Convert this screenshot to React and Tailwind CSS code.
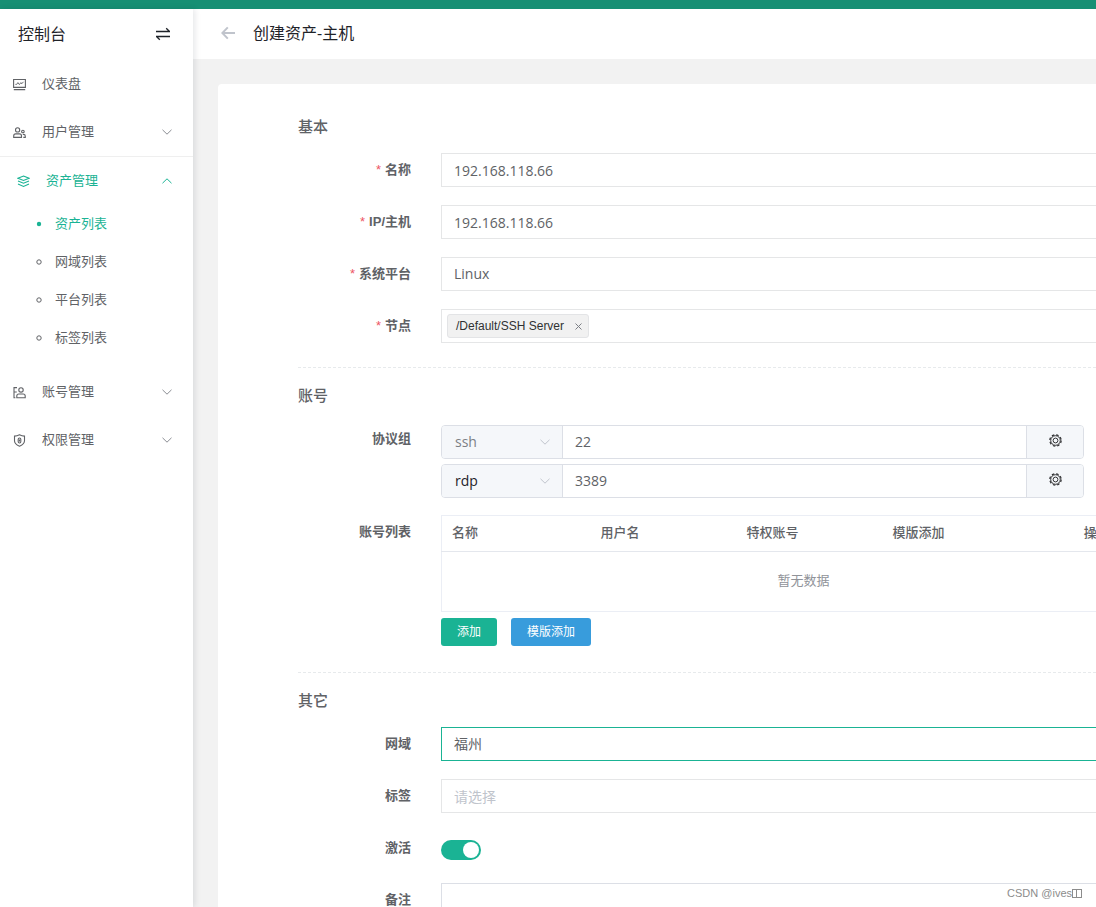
import { useState } from "react";

const Chevron = ({ up, className }) => (
  <svg
    viewBox="0 0 10 6"
    width="10"
    height="6"
    fill="none"
    stroke="currentColor"
    className={className}
    aria-hidden="true"
  >
    <path d={up ? "M0.5 5.2 5 0.8l4.5 4.4" : "M0.5 0.8 5 5.2l4.5-4.4"} />
  </svg>
);

const Icon = ({ children }) => (
  <svg
    viewBox="0 0 13 13"
    width="13"
    height="13"
    fill="none"
    stroke="currentColor"
    strokeWidth="1.1"
    className="shrink-0"
    aria-hidden="true"
  >
    {children}
  </svg>
);

const DashboardIcon = () => (
  <Icon>
    <path d="M0.6 1.5h11.8v7.9H0.6zM0.8 11.6h11.4" />
    <path d="M2.4 6.4h1.3l1.2-1.8 1.5 2 1.5-2 .8 1.2 1.8-2" strokeWidth="0.9" />
  </Icon>
);

const UsersIcon = () => (
  <Icon>
    <circle cx="4.6" cy="3.9" r="2.1" />
    <path d="M0.7 11.4V9.9c0-1.2.8-2 2-2h3.8c1.2 0 2 .8 2 2v1.5z" />
    <circle cx="9.9" cy="5.5" r="1.3" />
    <path d="M9.8 8.4h.7c1.1 0 1.8.7 1.8 1.8v1.2h-2" />
  </Icon>
);

const LayersIcon = () => (
  <Icon>
    <path d="M6.5 1 12 3.2 6.5 5.4 1 3.2z" />
    <path d="m1 6 5.5 2.200L12 6M1 9l5.500 2.400L12 9" />
  </Icon>
);

const AccountIcon = () => (
  <Icon>
    <path d="M4 1.600H1v10.200h1.400M1 6h2.800" />
    <circle cx="8" cy="3.900" r="2.200" />
    <path d="M3.800 11.700V10c0-1.200.8-2 2-2h4.400c1.200 0 2 .8 2 2v1.700z" />
  </Icon>
);

const ShieldIcon = () => (
  <Icon>
    <path d="M6.500.8c1.600.9 3.200 1.300 5 1.300v4.700c0 2.500-2 4.200-5 5.400-3-1.200-5-2.900-5-5.400V2.100c1.800 0 3.400-.4 5-1.300z" />
    <rect x="5.200" y="4" width="2.600" height="5" rx="1.200" />
    <path d="M6.500 5.500v2" />
  </Icon>
);

const GearIcon = () => (
  <Icon>
    <circle cx="6.500" cy="6.500" r="4.800" strokeWidth="1" />
    <circle cx="6.500" cy="6.500" r="5.700" strokeWidth="1.200" strokeDasharray="2.500 1.977" />
    <circle cx="6.500" cy="6.500" r="2.400" strokeWidth="1" />
  </Icon>
);

const assetLinks = ["资产列表", "网域列表", "平台列表", "标签列表"];

const MenuItem = ({ icon, label, expandable }) => (
  <li>
    <a href="#" className="flex h-12 items-center pl-[13px] pr-[21px]">
      {icon}
      <span className="ml-4 flex-1">{label}</span>
      {expandable && <Chevron className="text-[#8a8d93]" />}
    </a>
  </li>
);

function Sidebar() {
  return (
    <aside className="relative z-10 w-[193px] shrink-0 bg-white text-[13px] text-[#606266] shadow-[2px_0_6px_rgba(0,21,41,0.10)]">
      <div className="flex h-[51px] items-center justify-between pr-[23px] pb-[2px] pl-[18px] text-base text-[#1f2329]">
        <span>控制台</span>
        <button type="button" aria-label="切换视图">
          <svg viewBox="0 0 14 14" width="14" height="14" fill="none" stroke="currentColor" strokeWidth="1.3">
            <path d="M0 4.500h13.500L10.200 1.200M14 9.500H0.500l3.300 3.300" />
          </svg>
        </button>
      </div>
      <nav>
        <ul>
          <MenuItem icon={<DashboardIcon />} label="仪表盘" />
          <MenuItem icon={<UsersIcon />} label="用户管理" expandable />
          <li className="border-t border-[#efefef] pb-[11px]">
            <a href="#" className="flex h-12 items-center pl-[17px] pr-[21px] text-[#1ab394]">
              <LayersIcon />
              <span className="ml-4 flex-1">资产管理</span>
              <Chevron up />
            </a>
            <ul>
              {assetLinks.map((label, i) => (
                <li key={label}>
                  <a
                    href="#"
                    className={
                      i === 0
                        ? "flex h-[38px] items-center gap-[13px] pl-9 text-[#1ab394]"
                        : "flex h-[38px] items-center gap-[13px] pl-9"
                    }
                  >
                    <svg viewBox="0 0 6 6" width="6" height="6" aria-hidden="true">
                      {i === 0 ? (
                        <circle cx="3" cy="3" r="2.200" fill="currentColor" />
                      ) : (
                        <circle cx="3" cy="3" r="2.200" fill="none" stroke="currentColor" />
                      )}
                    </svg>
                    {label}
                  </a>
                </li>
              ))}
            </ul>
          </li>
          <MenuItem icon={<AccountIcon />} label="账号管理" expandable />
          <MenuItem icon={<ShieldIcon />} label="权限管理" expandable />
        </ul>
      </nav>
    </aside>
  );
}

const fieldClass =
  "block h-[34px] w-full appearance-none border border-[#e5e6e7] bg-white px-3 text-sm text-[#606266] outline-none placeholder:text-[#c0c4cc]";

const Row = ({ label, id, required, children }) => (
  <div className="flex items-start">
    <label
      htmlFor={id}
      className="w-[143px] shrink-0 pr-[30px] text-right font-['Liberation_Sans','Noto_Sans_CJK_SC',sans-serif] text-[13px] leading-[34px] font-bold"
    >
      {required && <span className="mr-1 font-normal text-[#ed5565]">*</span>}
      {label}
    </label>
    <div className="min-w-0 flex-1">{children}</div>
  </div>
);

const SectionTitle = ({ children }) => (
  <h3 className="mb-4 text-[15px] leading-[22px] font-medium">{children}</h3>
);

const Divider = () => <hr className="mb-4 border-t border-dashed border-[#e7eaec]" />;

function Protocol({ id, name, port, disabled }) {
  return (
    <div className="flex h-[34px] w-[643px] overflow-hidden rounded border border-[#dcdfe6] text-sm">
      <div className="relative w-[121px] border-r border-[#dcdfe6] bg-[#f5f7fa]">
        <select
          id={id}
          aria-label="协议"
          defaultValue={name}
          className={
            disabled
              ? "h-full w-full appearance-none pl-[13px] text-[#7c7f85] outline-none"
              : "h-full w-full appearance-none pl-[13px] text-[#1f2329] outline-none"
          }
        >
          <option>{name}</option>
        </select>
        <Chevron className="pointer-events-none absolute top-[13px] right-3 text-[#c0c4cc]" />
      </div>
      <input
        aria-label="端口"
        defaultValue={port}
        className="min-w-0 flex-1 px-3 text-[#606266] outline-none"
      />
      <button
        type="button"
        aria-label="协议设置"
        className="flex w-[57px] items-center justify-center border-l border-[#dcdfe6] bg-[#f5f7fa] pb-[3px] text-[#303133]"
      >
        <GearIcon />
      </button>
    </div>
  );
}

function AccountTable() {
  return (
    <table className="w-full table-fixed border border-[#ebeef5] text-[13px] leading-5">
      <colgroup>
        <col className="w-[149px]" />
        <col className="w-[146px]" />
        <col className="w-[146px]" />
        <col className="w-[146px]" />
        <col />
      </colgroup>
      <thead>
        <tr className="h-9 border-b border-[#e4e7ed] text-left">
          <th className="px-[10px] pb-[3px] font-medium">名称</th>
          <th className="px-[10px] pb-[3px] font-medium">用户名</th>
          <th className="px-[10px] pb-[3px] font-medium">特权账号</th>
          <th className="px-[10px] pb-[3px] font-medium">模版添加</th>
          <th className="px-[10px] pb-[3px] text-center font-medium">操作</th>
        </tr>
      </thead>
      <tbody>
        <tr className="h-[60px]">
          <td colSpan={5} className="pb-[3px] text-center text-[#909399]">
            暂无数据
          </td>
        </tr>
      </tbody>
    </table>
  );
}

export default function App() {
  const [active, setActive] = useState(true);

  return (
    <div className="flex h-screen flex-col overflow-hidden bg-[#f2f2f2] font-['Open_Sans','Noto_Sans_CJK_SC',sans-serif] text-[#606266]">
      <div className="h-[9px] shrink-0 bg-[#178f74]" />
      <div className="flex min-h-0 flex-1">
        <Sidebar />
        <main className="min-w-0 flex-1 overflow-hidden">
          <header className="flex h-[50px] items-center bg-white pb-[2px] pl-7 text-base text-[#1f2329]">
            <button type="button" aria-label="返回" className="mr-[18px] text-[#c0c4cc]">
              <svg viewBox="0 0 14 14" width="14" height="14" fill="none" stroke="currentColor" strokeWidth="2">
                <path d="M14 7H1.500M6.800 1.400 1.300 7l5.500 5.600" />
              </svg>
            </button>
            <h1>创建资产-主机</h1>
          </header>

          <form className="mt-[25px] ml-[25px] min-w-[1028px] rounded bg-white px-20 pt-[31px] pb-8">
            <section className="pb-6">
              <SectionTitle>基本</SectionTitle>
              <div className="space-y-[18px]">
                <Row label="名称" id="name" required>
                  <input id="name" defaultValue="192.168.118.66" className={fieldClass} />
                </Row>
                <Row label="IP/主机" id="address" required>
                  <input id="address" defaultValue="192.168.118.66" className={fieldClass} />
                </Row>
                <Row label="系统平台" id="platform" required>
                  <select id="platform" className={fieldClass}>
                    <option>Linux</option>
                  </select>
                </Row>
                <Row label="节点" id="nodes" required>
                  <div className="flex h-[34px] items-center border border-[#e5e6e7] pl-[5px]">
                    <span className="flex h-6 items-center rounded-[3px] border border-[#e3e4e6] bg-[#f1f1f1] pl-2 font-['Liberation_Sans',sans-serif] text-xs text-[#303133]">
                      /Default/SSH Server
                      <button
                        type="button"
                        aria-label="移除节点"
                        className="flex h-4 w-6 items-center justify-center pl-[5px] text-[#7c7f85]"
                      >
                        <svg viewBox="0 0 7 7" width="7" height="7" stroke="currentColor">
                          <path d="m.5.5 6 6m0-6-6 6" />
                        </svg>
                      </button>
                    </span>
                    <input id="nodes" className="min-w-0 flex-1 px-2 text-sm outline-none" />
                  </div>
                </Row>
              </div>
            </section>

            <Divider />
            <section className="pb-[26px]">
              <SectionTitle>账号</SectionTitle>
              <div className="space-y-[17px]">
                <Row label="协议组" id="protocol">
                  <div className="space-y-[5px] pt-[3px]">
                    <Protocol id="protocol" name="ssh" port="22" disabled />
                    <Protocol name="rdp" port="3389" />
                  </div>
                </Row>
                <Row label="账号列表">
                  <AccountTable />
                  <div className="mt-[6px] flex gap-[14px] text-xs text-white">
                    <button type="button" className="h-7 rounded-[3px] bg-[#1ab394] px-4">
                      添加
                    </button>
                    <button type="button" className="h-7 rounded-[3px] bg-[#389cdc] px-4">
                      模版添加
                    </button>
                  </div>
                </Row>
              </div>
            </section>

            <Divider />
            <section>
              <SectionTitle>其它</SectionTitle>
              <div className="space-y-[18px]">
                <Row label="网域" id="domain">
                  <select
                    id="domain"
                    className="block h-[34px] w-full appearance-none border border-[#1ab394] bg-white px-3 text-sm text-[#606266] outline-none"
                  >
                    <option>福州</option>
                  </select>
                </Row>
                <Row label="标签" id="labels">
                  <input id="labels" placeholder="请选择" className={fieldClass} />
                </Row>
                <Row label="激活" id="active">
                  <div className="pt-[9px]">
                    <input
                      id="active"
                      type="checkbox"
                      role="switch"
                      checked={active}
                      onChange={(e) => setActive(e.target.checked)}
                      className="flex h-5 w-10 appearance-none items-center rounded-full bg-[#dcdfe6] px-[2px] before:size-4 before:rounded-full before:bg-white checked:justify-end checked:bg-[#1ab394]"
                    />
                  </div>
                </Row>
                <Row label="备注" id="comment">
                  <textarea
                    id="comment"
                    rows={3}
                    className="block w-full resize-none border border-[#dcdfe6] px-3 py-1 text-sm outline-none"
                  />
                </Row>
              </div>
            </section>
          </form>
        </main>
      </div>

      <div className="absolute right-[14px] bottom-[6px] flex items-center font-['Liberation_Sans',sans-serif] text-[11px] leading-4 text-[#8c8c8c]">
        CSDN @ives
        <span className="h-[9px] w-[5px] border border-[#8c8c8c]" />
        <span className="h-[9px] w-[5px] border border-l-0 border-[#8c8c8c]" />
      </div>
    </div>
  );
}
